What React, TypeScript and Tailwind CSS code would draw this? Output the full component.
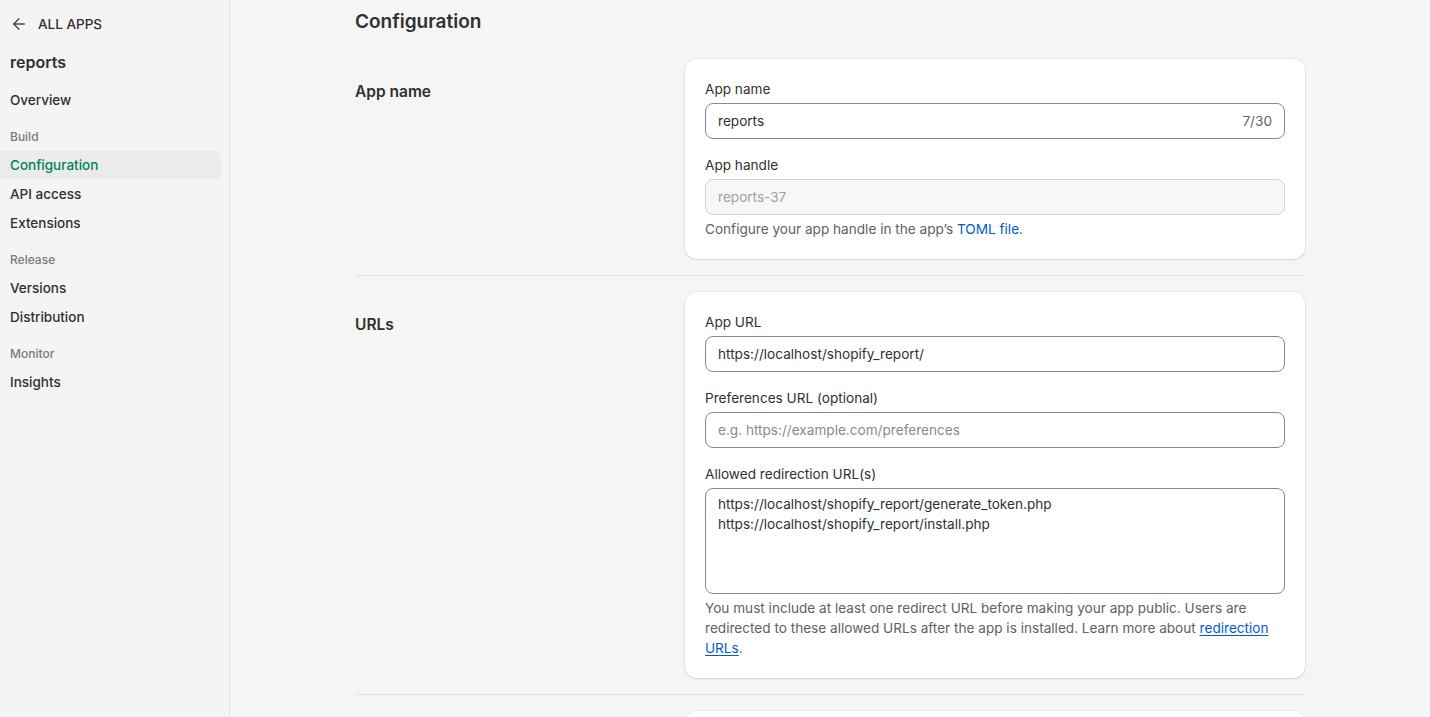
import { ArrowLeft } from "lucide-react";

const FONT = { fontFamily: "Inter, 'Noto Sans', sans-serif" };

type NavItem = { label: string; active?: boolean };
type NavGroup = { title?: string; items: NavItem[] };

const NAV: NavGroup[] = [
  { title: "Build", items: [{ label: "Configuration", active: true }, { label: "API access" }, { label: "Extensions" }] },
  { title: "Release", items: [{ label: "Versions" }, { label: "Distribution" }] },
  { title: "Monitor", items: [{ label: "Insights" }] },
];

function Sidebar() {
  return (
    <aside className="w-[230px] shrink-0 border-r border-[#e3e3e3] bg-[#f4f4f4] pt-[10px] pr-2">
      <div className="flex h-7 items-center gap-[10px] pl-[10px] text-[13.5px] font-medium text-[#303030]">
        <ArrowLeft size={18} strokeWidth={1.8} className="text-[#4a4a4a]" />
        <span>ALL APPS</span>
      </div>
      <div className="mt-[10px] flex h-7 items-center pl-[10px] text-[16px] font-semibold text-[#303030]">
        reports
      </div>
      <div className="mt-[10px] flex h-7 items-center pl-[10px] text-[13.5px] font-medium text-[#303030]">
        Overview
      </div>
      {NAV.map((group) => (
        <div key={group.title} className="mt-[9px]">
          <div className="flex h-7 items-center pl-[10px] text-[12px] font-medium text-[#7a7a7a]">
            {group.title}
          </div>
          <div className="flex flex-col gap-px">
            {group.items.map((item) => (
              <div
                key={item.label}
                className={
                  item.active
                    ? "flex h-7 items-center rounded-r-[6px] bg-[#ebebeb] pl-[10px] text-[13.5px] font-medium text-[#008060]"
                    : "flex h-7 items-center pl-[10px] text-[13.5px] font-medium text-[#303030]"
                }
              >
                {item.label}
              </div>
            ))}
          </div>
        </div>
      ))}
    </aside>
  );
}

function Card({ children }: { children: React.ReactNode }) {
  return (
    <div className="w-[620px] rounded-[12px] bg-white p-5 shadow-[0_0_0_1px_rgba(0,0,0,0.03),0_1px_2px_rgba(0,0,0,0.12)]">
      {children}
    </div>
  );
}

function Label({ children }: { children: React.ReactNode }) {
  return <div className="mb-1 text-[13.6px] leading-5 text-[#303030]">{children}</div>;
}

function Input({ value, placeholder, suffix }: { value?: string; placeholder?: string; suffix?: string }) {
  return (
    <div className="flex h-9 items-center justify-between rounded-[8px] border border-[#8a8a8a] bg-white px-3 pt-px text-[13.6px]">
      {value ? (
        <span className="text-[#303030]">{value}</span>
      ) : (
        <span className="text-[#8a8a8a]">{placeholder}</span>
      )}
      {suffix && <span className="text-[#616161]">{suffix}</span>}
    </div>
  );
}

function Section({ title, children, last }: { title: string; children: React.ReactNode; last?: boolean }) {
  return (
    <section className={last ? "flex py-4" : "flex border-b border-[#e3e3e3] py-4"}>
      <div className="w-[330px] shrink-0 pt-[21px] text-[15.5px] font-semibold leading-6 text-[#303030]">{title}</div>
      {children}
    </section>
  );
}

export default function App() {
  return (
    <div style={FONT} className="flex min-h-screen bg-[#f5f5f5] text-[#303030]">
      <Sidebar />
      <main className="flex-1">
        <div className="mx-auto w-[950px] pt-[8px]">
          <h1 className="mb-[7px] h-7 text-[19px] font-semibold leading-7 text-[#303030]">Configuration</h1>

          <Section title="App name">
            <Card>
              <Label>App name</Label>
              <Input value="reports" suffix="7/30" />
              <div className="mt-4">
                <Label>App handle</Label>
                <div className="flex h-9 items-center rounded-[8px] border border-[#d4d4d4] bg-[#f7f7f7] px-3 pt-px text-[13.6px] text-[#a0a0a0]">
                  reports-37
                </div>
                <p className="mt-1 text-[13.6px] leading-5 text-[#616161]">
                  Configure your app handle in the app’s <span className="text-[#005bd3]">TOML file</span>.
                </p>
              </div>
            </Card>
          </Section>

          <Section title="URLs">
            <Card>
              <Label>App URL</Label>
              <Input value="https://localhost/shopify_report/" />
              <div className="mt-4">
                <Label>Preferences URL (optional)</Label>
                <Input placeholder="e.g. https://example.com/preferences" />
              </div>
              <div className="mt-4">
                <Label>Allowed redirection URL(s)</Label>
                <div className="h-[106px] rounded-[8px] border border-[#8a8a8a] bg-white px-3 pt-[5px] text-[13.6px] leading-5 text-[#303030]">
                  <div>https://localhost/shopify_report/generate_token.php</div>
                  <div>https://localhost/shopify_report/install.php</div>
                </div>
                <p className="mt-1 text-[13.6px] leading-5 text-[#616161]">
                  You must include at least one redirect URL before making your app public. Users are redirected to
                  these allowed URLs after the app is installed. Learn more about{" "}
                  <span className="text-[#005bd3] underline underline-offset-2">redirection URLs</span>.
                </p>
              </div>
            </Card>
          </Section>

          <Section title="Webhooks API Version" last>
            <Card>
              <Label>Event version</Label>
              <Input value="2024-01" />
            </Card>
          </Section>
        </div>
      </main>
    </div>
  );
}
